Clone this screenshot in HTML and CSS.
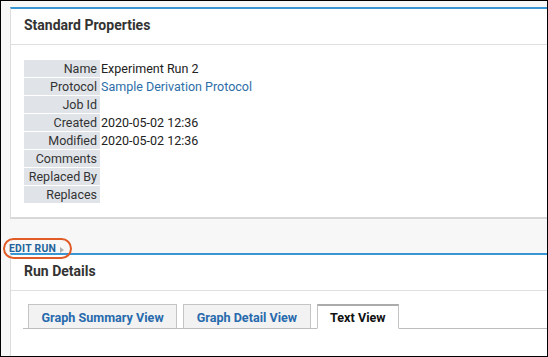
FILE: index.html
```html
<!DOCTYPE html>
<html lang="en">
<head>
  <meta charset="UTF-8" />
  <meta name="viewport" content="width=device-width, initial-scale=1.0" />
  <title>Experiment Run 2</title>
  <link rel="stylesheet" href="styles.css">
</head>
<body>
  <div class="frame">

    <section class="panel panel-props">
      <div class="panel-head">Standard Properties</div>
      <div class="panel-body">
        <table class="props">
          <tr><td class="lbl">Name</td><td class="val">Experiment Run 2</td></tr>
          <tr><td class="lbl">Protocol</td><td class="val"><a href="#">Sample Derivation Protocol</a></td></tr>
          <tr><td class="lbl">Job Id</td><td class="val"></td></tr>
          <tr><td class="lbl">Created</td><td class="val">2020-05-02 12:36</td></tr>
          <tr><td class="lbl">Modified</td><td class="val">2020-05-02 12:36</td></tr>
          <tr><td class="lbl">Comments</td><td class="val"></td></tr>
          <tr><td class="lbl">Replaced By</td><td class="val"></td></tr>
          <tr><td class="lbl">Replaces</td><td class="val"></td></tr>
        </table>
      </div>
    </section>

    <div class="actions">
      <a class="edit-run" href="#">Edit Run<span class="caret"></span></a>
    </div>

    <section class="panel panel-details">
      <div class="panel-head">Run Details</div>
      <div class="panel-body">
        <ul class="tabs">
          <li class="tab"><a href="#">Graph Summary View</a></li>
          <li class="tab"><a href="#">Graph Detail View</a></li>
          <li class="tab active"><a href="#">Text View</a></li>
        </ul>
      </div>
    </section>

  </div>
</body>
</html>
```

FILE: styles.css
```css
* {
  margin: 0;
  padding: 0;
  box-sizing: border-box;
}

body {
  font-family: 'Roboto', 'Liberation Sans', sans-serif;
  color: #222;
}

a {
  text-decoration: none;
}

/* screenshot frame */
.frame {
  width: 548px;
  height: 357px;
  border: 1px solid #000;
  background: #f7f7f7;
  overflow: hidden;
  padding: 6px 0 0 9px;
}

.panel {
  background: #fff;
  border-top: 2px solid #3a96d2;
  border-left: 1px solid #dcdcdc;
}

.panel-head {
  font-size: 14px;
  font-weight: 700;
  line-height: 16px;
  color: #333;
  padding: 8px 13px 11px;
  border-bottom: 1px solid #e0e0e0;
}

.panel-props .panel-body {
  padding: 14px 13px 13px;
}

.panel-props {
  border-bottom: 2px solid #d8d8d8;
}

/* property table */
.props {
  border-collapse: separate;
  border-spacing: 0 1px;
  font-size: 12.5px;
}

.props td {
  height: 17px;
  line-height: 16px;
  padding-top: 1px;
  vertical-align: top;
}

.props .lbl {
  width: 76px;
  background: #e0e4e9;
  text-align: right;
  color: #333;
  padding-right: 3px;
  padding-left: 4px;
}

.props .val {
  padding-left: 1px;
}

.props a {
  color: #2d6ea8;
}

/* edit run link */
.actions {
  height: 34px;
  padding-top: 18px;
}

.edit-run {
  position: relative;
  display: inline-block;
  margin-left: -1px;
  font-size: 10.4px;
  line-height: 12px;
  font-weight: 700;
  letter-spacing: 0.25px;
  text-transform: uppercase;
  color: #22639b;
}

.edit-run .caret {
  display: inline-block;
  margin-left: 4px;
  border-left: 4px solid #b0b0b0;
  border-top: 3.5px solid transparent;
  border-bottom: 3.5px solid transparent;
  vertical-align: -0.5px;
}

/* annotation ring */
.edit-run::after {
  content: '';
  position: absolute;
  left: -6px;
  right: -8px;
  top: -5px;
  bottom: -4px;
  border: 2px solid #e15b26;
  border-radius: 11px;
}

/* tabs */
.panel-details .panel-body {
  padding: 13px 0 40px 12px;
}

.tabs {
  list-style: none;
  display: flex;
  padding-left: 5px;
  border-bottom: 1px solid #bdbdbd;
}

.tab {
  margin-right: 6px;
  margin-bottom: -1px;
  background: #f2f2f2;
  border: 1px solid #c4c4c4;
  border-bottom-color: #bdbdbd;
  padding: 2px 12.5px 0;
  font-size: 12.6px;
  font-weight: 700;
  line-height: 21px;
}

.tab a {
  color: #276aad;
}

.tab.active {
  background: #fff;
  border-top: 2px solid #ababab;
  border-bottom-color: #fff;
  padding-top: 1px;
}

.tab.active a {
  color: #111;
}
```
